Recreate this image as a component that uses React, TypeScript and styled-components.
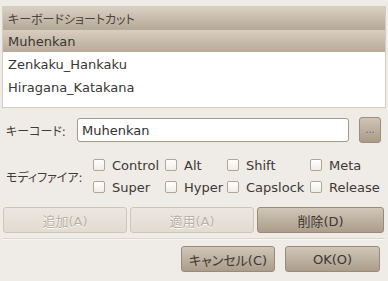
import React from "react";
import styled, { createGlobalStyle } from "styled-components";

const Global = createGlobalStyle`
  html, body {
    margin: 0;
    padding: 0;
    background: #efebe6;
  }
  body {
    font-family: "DejaVu Sans", "Noto Sans CJK JP", sans-serif;
    font-size: 13px;
    font-feature-settings: "palt";
    color: #3c3a36;
  }
`;

const Dialog = styled.div`
  width: 388px;
  height: 281px;
  box-sizing: border-box;
  padding: 6px 2px 0 2px;
  display: flex;
  flex-direction: column;
`;

const ListBox = styled.div`
  height: 102px;
  box-sizing: border-box;
  border: 1px solid #d6cdc0;
  background: #fff;
  display: flex;
  flex-direction: column;
`;

const Header = styled.div`
  height: 22px;
  padding-left: 5px;
  display: flex;
  align-items: center;
  font-size: 12px;
  color: #4a443c;
  background: linear-gradient(#d9d0c4, #b6a998);
  border-bottom: 1px solid #b7ab9b;
`;

const Row = styled.div<{ $selected?: boolean }>`
  height: 22px;
  padding-left: 5px;
  display: flex;
  align-items: center;
  margin-bottom: 1px;
  color: #3a3733;
  background: ${(p) => (p.$selected ? "linear-gradient(#d8cec1, #b8aa98)" : "#fff")};
`;

const FormRow = styled.div`
  display: flex;
  align-items: center;
  height: 26px;
  margin-top: 9px;
  padding-left: 4px;
`;

const Label = styled.div<{ $w: number }>`
  width: ${(p) => p.$w}px;
  font-size: 12px;
  white-space: nowrap;
  color: #3f3c38;
  flex-shrink: 0;
`;

const Entry = styled.div`
  width: 272px;
  height: 24px;
  box-sizing: border-box;
  border: 1px solid #a69a86;
  border-radius: 3px;
  background: #fff;
  padding-left: 4px;
  display: flex;
  align-items: center;
  color: #33302c;
`;

const DotsButton = styled.div`
  width: 22px;
  height: 26px;
  margin-left: 10px;
  box-sizing: border-box;
  border: 1px solid #9a8d7b;
  border-radius: 3px;
  background: linear-gradient(#cfc4b6, #a99b87);
  display: flex;
  align-items: center;
  justify-content: center;
  font-size: 10px;
  color: #5a6a88;
  padding-bottom: 2px;
`;

const ModRow = styled.div`
  display: flex;
  align-items: center;
  margin-top: 16px;
  padding-left: 4px;
`;

const ModGrid = styled.div`
  display: grid;
  grid-template-columns: 72px 62px 83px auto;
  row-gap: 10px;
`;

const Check = styled.div`
  display: flex;
  align-items: center;
  height: 12px;
  color: #3c3935;
`;

const Box = styled.span`
  width: 12px;
  height: 12px;
  box-sizing: border-box;
  border: 1px solid #b2a693;
  border-radius: 2px;
  background: linear-gradient(#ffffff, #f1ede7);
  margin-right: 7px;
  flex-shrink: 0;
`;

const ButtonRow = styled.div`
  display: flex;
  gap: 3px;
  margin-top: 14px;
  padding-left: 1px;
`;

const Button = styled.div<{ $disabled?: boolean; $w: number }>`
  width: ${(p) => p.$w}px;
  height: 26px;
  box-sizing: border-box;
  border-radius: 3px;
  display: flex;
  align-items: center;
  justify-content: center;
  font-size: 13px;
  border: 1px solid ${(p) => (p.$disabled ? "#cfc6b9" : "#998b78")};
  background: ${(p) =>
    p.$disabled
      ? "linear-gradient(#ebe6df, #e2dbd1)"
      : "linear-gradient(#d0c6b9, #ab9d8a)"};
  color: ${(p) => (p.$disabled ? "#b8b0a4" : "#3c3833")};
  text-shadow: ${(p) => (p.$disabled ? "0 1px 0 #fff" : "none")};
`;

const Separator = styled.div`
  height: 1px;
  margin: 5px 1px 0 1px;
  background: #ddd6cc;
  border-bottom: 1px solid #f9f7f4;
`;

const Actions = styled.div`
  display: flex;
  justify-content: flex-end;
  gap: 10px;
  margin-top: 6px;
  padding-right: 6px;
`;

const mods = ["Control", "Alt", "Shift", "Meta", "Super", "Hyper", "Capslock", "Release"];

export default function App() {
  return (
    <>
      <Global />
      <Dialog>
        <ListBox>
          <Header>キーボードショートカット</Header>
          <Row $selected>Muhenkan</Row>
          <Row>Zenkaku_Hankaku</Row>
          <Row>Hiragana_Katakana</Row>
        </ListBox>
        <FormRow>
          <Label $w={71}>キーコード:</Label>
          <Entry>Muhenkan</Entry>
          <DotsButton>...</DotsButton>
        </FormRow>
        <ModRow>
          <Label $w={87}>モディファイア:</Label>
          <ModGrid>
            {mods.map((m) => (
              <Check key={m}>
                <Box />
                {m}
              </Check>
            ))}
          </ModGrid>
        </ModRow>
        <ButtonRow>
          <Button $disabled $w={124}>追加(A)</Button>
          <Button $disabled $w={124}>適用(A)</Button>
          <Button $w={127}>削除(D)</Button>
        </ButtonRow>
        <Separator />
        <Actions>
          <Button $w={94}>キャンセル(C)</Button>
          <Button $w={95}>OK(O)</Button>
        </Actions>
      </Dialog>
    </>
  );
}
